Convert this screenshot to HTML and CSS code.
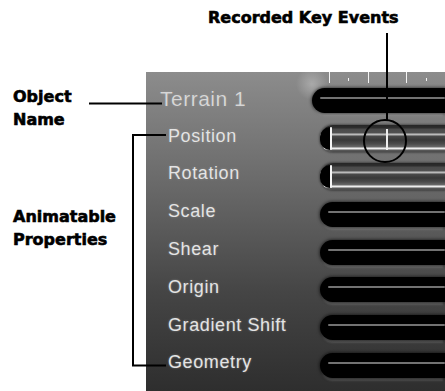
FILE: index.html
```html
<!DOCTYPE html>
<html lang="en">
<head>
    <meta charset="UTF-8">
    <title>Timeline - Animatable Properties</title>
    <link rel="stylesheet" href="styles.css">
</head>
<body>

<div class="figure">
    <div class="caption-top">Recorded Key Events</div>

    <div class="callouts">
        <div class="callout callout-object">Object<br>Name</div>
        <div class="callout callout-props">Animatable<br>Properties</div>
    </div>

    <div class="panel">
        <div class="ruler">
            <span class="tick big"></span><span class="tick"></span>
            <span class="tick big"></span><span class="tick"></span>
            <span class="tick big"></span><span class="tick"></span>
        </div>

        <div class="track">
            <div class="name object-name">Terrain 1</div>
            <div class="bar"></div>
        </div>
        <div class="track">
            <div class="name">Position</div>
            <div class="bar selected"><span class="key" style="left: 66px"></span></div>
        </div>
        <div class="track">
            <div class="name">Rotation</div>
            <div class="bar selected"></div>
        </div>
        <div class="track">
            <div class="name">Scale</div>
            <div class="bar"></div>
        </div>
        <div class="track">
            <div class="name">Shear</div>
            <div class="bar"></div>
        </div>
        <div class="track">
            <div class="name">Origin</div>
            <div class="bar"></div>
        </div>
        <div class="track">
            <div class="name">Gradient Shift</div>
            <div class="bar"></div>
        </div>
        <div class="track">
            <div class="name">Geometry</div>
            <div class="bar"></div>
        </div>
    </div>

    <!-- annotation lines drawn over the screenshot -->
    <svg class="leaders" width="445" height="391" viewBox="0 0 445 391">
        <line x1="89" y1="103.5" x2="162" y2="103.5" />
        <polyline points="166,135 133,135 133,365.5 166,365.5" />
        <line x1="387" y1="33" x2="387" y2="120" />
        <circle cx="385" cy="141" r="21" />
    </svg>
</div>

</body>
</html>
```

FILE: styles.css
```css
body {
    margin: 0;
    background: #fff;
    overflow: hidden;
}

.figure {
    position: relative;
    width: 445px;
    height: 391px;
    display: grid;
    grid-template-columns: 146px 1fr;
    grid-template-rows: 72px 1fr;
}

.caption-top,
.callout {
    font-family: "DejaVu Sans", sans-serif;
    font-weight: bold;
    font-size: 16px;
    line-height: 23px;
    color: #000;
    -webkit-text-stroke: .6px #000;
}

.caption-top {
    grid-column: 1 / 3;
    padding: 6px 0 0 208px;
}

.callouts {
    padding-left: 13px;
}
.callout-object {
    margin-top: 13px;
}
.callout-props {
    margin-top: 74px;
}

/* the dark application panel */
.panel {
    background:
        radial-gradient(circle at 166px 12px, rgba(255,255,255,.28), rgba(255,255,255,0) 16px),
        linear-gradient(to bottom, #8c8c8c 0, #6a6a6a 110px, #454545 220px, #2e2e2e 319px);
    overflow: hidden;
    font-family: "Liberation Sans", Arial, sans-serif;
}

.ruler {
    height: 10px;
    display: flex;
    align-items: flex-start;
    padding-left: 183px;
}
.tick {
    width: 2px;
    height: 3px;
    margin-top: 6px;
    margin-right: 19px;
    background: #f4f4f4;
}
.tick.big {
    height: 11px;
    margin-top: 0;
}

.track {
    height: 37.8px;
    display: flex;
    align-items: center;
}

.name {
    width: 152px;
    padding: 0 0 5px 22px;
    font-size: 18px;
    letter-spacing: .6px;
    color: #e4e4e4;
    text-shadow: 0 0 2px rgba(255,255,255,.45), 0 0 1px rgba(0,0,0,.6);
    white-space: nowrap;
}
.name.object-name {
    padding-left: 14px;
    padding-bottom: 4px;
    font-size: 21px;
    letter-spacing: .5px;
    color: #d6d6d6;
}

.bar {
    flex: 1;
    height: 25px;
    position: relative;
    background: #000;
    border-radius: 13px 0 0 13px;
    box-shadow: 0 0 3px 1px rgba(0,0,0,.5), 0 5px 2px -2px rgba(255,255,255,.16);
}
.bar::before {
    content: '';
    position: absolute;
    left: 8px;
    right: 0;
    top: 9px;
    height: 2px;
    background: linear-gradient(to bottom, #5a5a5a, #8a8a8a, #5a5a5a);
    border-radius: 1px;
}

.bar.selected {
    height: 27px;
    background: linear-gradient(to bottom,
        #262626 0, #2e2e2e 3px, #4a4a4a 4px, #505050 8px, #c4c4c4 9px, #b0b0b0 10px,
        #4a4a4a 11px, #383838 15px, #4c4c4c 19px, #6a6a6a 22px, #f2f2f2 23px,
        #e8e8e8 24px, #5a5a5a 25px, #4a4a4a 27px);
    box-shadow: 0 0 2px 1px rgba(0,0,0,.35);
}
.bar.selected::before {
    left: 10px;
    top: 2px;
    bottom: 2px;
    width: 2px;
    height: auto;
    background: #f4f4f4;
}
.bar.selected::after {
    content: '';
    position: absolute;
    left: 0;
    top: 2px;
    bottom: 2px;
    width: 10px;
    background: #000;
    border-radius: 12px 0 0 12px;
}

.key {
    position: absolute;
    top: 4px;
    bottom: 2px;
    width: 2px;
    background: #eee;
}

.leaders {
    position: absolute;
    left: 0;
    top: 0;
    pointer-events: none;
}
.leaders line,
.leaders polyline,
.leaders circle {
    fill: none;
    stroke: #000;
    stroke-width: 2;
}
```
